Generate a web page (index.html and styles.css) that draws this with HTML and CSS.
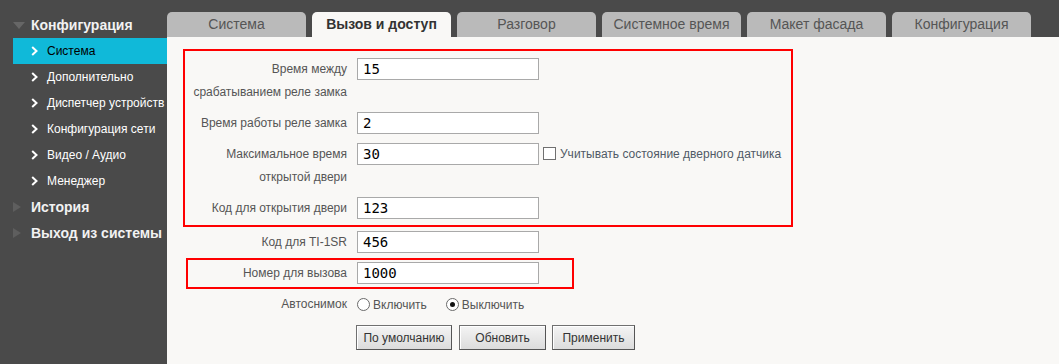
FILE: index.html
```html
<!DOCTYPE html>
<html lang="ru">
<head>
<meta charset="utf-8">
<title>Вызов и доступ</title>
<link rel="stylesheet" href="styles.css">
</head>
<body>
<div class="app">
  <aside class="side">
    <div class="grp"><span class="tri-down"></span>Конфигурация</div>
    <ul class="sub">
      <li class="item active"><svg class="chev" width="7" height="10" viewBox="0 0 7 10"><polyline points="1.2,1 5.5,5 1.2,9" fill="none" stroke="#fff" stroke-width="2"/></svg>Система</li>
      <li class="item"><svg class="chev" width="7" height="10" viewBox="0 0 7 10"><polyline points="1.2,1 5.5,5 1.2,9" fill="none" stroke="#fff" stroke-width="2"/></svg>Дополнительно</li>
      <li class="item"><svg class="chev" width="7" height="10" viewBox="0 0 7 10"><polyline points="1.2,1 5.5,5 1.2,9" fill="none" stroke="#fff" stroke-width="2"/></svg>Диспетчер устройств</li>
      <li class="item"><svg class="chev" width="7" height="10" viewBox="0 0 7 10"><polyline points="1.2,1 5.5,5 1.2,9" fill="none" stroke="#fff" stroke-width="2"/></svg>Конфигурация сети</li>
      <li class="item"><svg class="chev" width="7" height="10" viewBox="0 0 7 10"><polyline points="1.2,1 5.5,5 1.2,9" fill="none" stroke="#fff" stroke-width="2"/></svg>Видео / Аудио</li>
      <li class="item"><svg class="chev" width="7" height="10" viewBox="0 0 7 10"><polyline points="1.2,1 5.5,5 1.2,9" fill="none" stroke="#fff" stroke-width="2"/></svg>Менеджер</li>
    </ul>
    <div class="grp"><span class="tri-right"></span>История</div>
    <div class="grp"><span class="tri-right"></span>Выход из системы</div>
  </aside>
  <main class="main">
    <nav class="tabs">
      <div class="tab">Система</div>
      <div class="tab active">Вызов и доступ</div>
      <div class="tab">Разговор</div>
      <div class="tab">Системное время</div>
      <div class="tab">Макет фасада</div>
      <div class="tab">Конфигурация</div>
    </nav>
    <section class="panel">
      <div class="box box1">
        <div class="row">
          <div class="lbl">Время между<br>срабатыванием реле замка</div>
          <input class="inp" type="text" value="15">
        </div>
        <div class="row">
          <div class="lbl">Время работы реле замка</div>
          <input class="inp" type="text" value="2">
        </div>
        <div class="row">
          <div class="lbl">Максимальное время<br>открытой двери</div>
          <input class="inp" type="text" value="30">
          <span class="check"></span><span class="check-text">Учитывать состояние дверного датчика</span>
        </div>
        <div class="row">
          <div class="lbl">Код для открытия двери</div>
          <input class="inp" type="text" value="123">
        </div>
      </div>
      <div class="row row-free">
        <div class="lbl">Код для TI-1SR</div>
        <input class="inp" type="text" value="456">
      </div>
      <div class="box box2">
        <div class="row row-tight">
          <div class="lbl">Номер для вызова</div>
          <input class="inp" type="text" value="1000">
        </div>
      </div>
      <div class="row row-free">
        <div class="lbl">Автоснимок</div>
        <div class="radios">
          <span class="radio"></span><span class="radio-text">Включить</span>
          <span class="radio on"></span><span class="radio-text">Выключить</span>
        </div>
      </div>
      <div class="buttons">
        <button class="btn btn-def">По умолчанию</button>
        <button class="btn btn-upd">Обновить</button>
        <button class="btn btn-app">Применить</button>
      </div>
    </section>
  </main>
</div>
</body>
</html>
```

FILE: styles.css
```css
html, body {
  margin: 0;
  padding: 0;
  height: 364px;
  overflow: hidden;
  background: #4a4a4a;
  font-family: "Liberation Sans", Arial, sans-serif;
}

.app {
  display: grid;
  grid-template-columns: 167px 1fr;
  height: 364px;
}

/* Sidebar */
.side {
  background: #4a4a4a;
  padding-top: 12px;
  overflow: hidden;
  white-space: nowrap;
}

.grp {
  display: flex;
  align-items: center;
  height: 26px;
  padding-left: 13px;
  color: #f2f2f2;
  font-size: 14px;
  font-weight: bold;
}

.tri-down {
  width: 0;
  height: 0;
  border-left: 6px solid transparent;
  border-right: 6px solid transparent;
  border-top: 7px solid #666;
  margin-right: 6px;
}

.tri-right {
  width: 0;
  height: 0;
  border-top: 5px solid transparent;
  border-bottom: 5px solid transparent;
  border-left: 8px solid #5e5e5e;
  margin-right: 10px;
}

.sub {
  list-style: none;
  margin: 0 0 0 13px;
  padding: 0;
}

.item {
  display: flex;
  align-items: center;
  height: 26px;
  padding-left: 18px;
  color: #fff;
  font-size: 12px;
}

.item.active {
  background: #10b9d9;
  color: #000;
}

.chev {
  margin-right: 9px;
  flex: none;
}

/* Main */
.main {
  display: flex;
  flex-direction: column;
  min-width: 0;
}

.tabs {
  display: flex;
  gap: 6px;
  padding-top: 12px;
  height: 25px;
  flex: none;
}

.tab {
  width: 139px;
  height: 25px;
  background: #bababa;
  border-radius: 5px 5px 0 0;
  color: #555;
  font-size: 14px;
  line-height: 25px;
  text-align: center;
}

.tab.active {
  background: #f9f8f6;
  color: #333;
  font-weight: bold;
}

.panel {
  flex: 1;
  background: #f9f8f6;
  padding: 12px 0 0 16px;
}

.box {
  border: 2px solid #ff0000;
  box-sizing: border-box;
}

.box1 {
  width: 610px;
  padding: 3px 0 1px 3px;
}

.box2 {
  width: 388px;
  margin-left: 3px;
}

.row {
  display: flex;
  align-items: flex-start;
  padding: 4px 0;
}

.row-free {
  padding-left: 5px;
}

.row-tight {
  padding: 2px 0;
}

.lbl {
  width: 159px;
  margin-right: 10px;
  text-align: right;
  font-size: 12px;
  line-height: 23px;
  color: #555;
  flex: none;
}

.inp {
  width: 182px;
  height: 22px;
  box-sizing: border-box;
  margin: 0;
  border: 1px solid #a9a9a9;
  background: #fff;
  padding: 0 5px;
  font-family: "DejaVu Sans Mono", "Liberation Mono", monospace;
  font-size: 14px;
  color: #000;
  outline: none;
}

.check {
  width: 13px;
  height: 13px;
  box-sizing: border-box;
  border: 1px solid #707070;
  background: #fff;
  margin: 4px 4px 0 4px;
  flex: none;
}

.check-text {
  font-size: 12px;
  line-height: 22px;
  color: #505a66;
}

.radios {
  display: flex;
  align-items: center;
  height: 23px;
}

.radio {
  width: 13px;
  height: 13px;
  box-sizing: border-box;
  border: 1px solid #6a6a6a;
  border-radius: 50%;
  background: #fff;
  margin-right: 3px;
  display: flex;
  align-items: center;
  justify-content: center;
}

.radio.on::after {
  content: "";
  width: 5px;
  height: 5px;
  border-radius: 50%;
  background: #111;
}

.radio-text {
  font-size: 12px;
  color: #555;
  margin-right: 19px;
}

.buttons {
  display: flex;
  margin: 5px 0 0 173px;
}

.btn {
  height: 25px;
  box-sizing: border-box;
  border: 1px solid #707070;
  border-right-color: #555;
  border-bottom-color: #555;
  background: linear-gradient(#f4f4f4, #dcdcdc);
  font-family: "Liberation Sans", Arial, sans-serif;
  font-size: 12px;
  color: #333;
  padding: 0;
  box-shadow: inset 1px 1px 0 #fff;
}

.btn-def { width: 96px; margin-right: 7px; }
.btn-upd { width: 87px; margin-right: 6px; }
.btn-app { width: 83px; }
```
